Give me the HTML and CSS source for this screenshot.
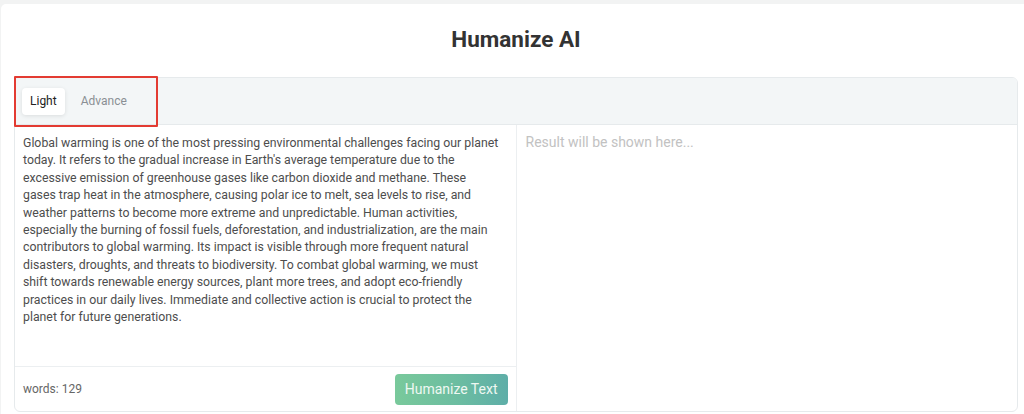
FILE: index.html
```html
<!DOCTYPE html>
<html lang="en">
<head>
<meta charset="utf-8">
<title>Humanize AI</title>
<link rel="stylesheet" href="styles.css">
</head>
<body>
<div class="card">
  <h1 class="title">Humanize AI</h1>
  <div class="panel">
    <div class="tabs">
      <button class="tab active">Light</button>
      <button class="tab">Advance</button>
    </div>
    <div class="highlight"></div>
    <div class="columns">
      <div class="col left">
        <div class="input-text">Global warming is one of the most pressing environmental challenges facing our planet today. It refers to the gradual increase in Earth's average temperature due to the excessive emission of greenhouse gases like carbon dioxide and methane. These gases trap heat in the atmosphere, causing polar ice to melt, sea levels to rise, and weather patterns to become more extreme and unpredictable. Human activities, especially the burning of fossil fuels, deforestation, and industrialization, are the main contributors to global warming. Its impact is visible through more frequent natural disasters, droughts, and threats to biodiversity. To combat global warming, we must shift towards renewable energy sources, plant more trees, and adopt eco-friendly practices in our daily lives. Immediate and collective action is crucial to protect the planet for future generations.</div>
        <div class="footer">
          <span class="words">words: 129</span>
          <button class="humanize">Humanize Text</button>
        </div>
      </div>
      <div class="col right">
        <div class="placeholder">Result will be shown here...</div>
      </div>
    </div>
  </div>
</div>
</body>
</html>
```
FILE: styles.css
```css
html, body {
  margin: 0;
  padding: 0;
}
body {
  background: #f2f3f3;
  font-family: Roboto, "Liberation Sans", Arial, sans-serif;
  height: 414px;
  overflow: hidden;
}
.card {
  background: #ffffff;
  margin: 4px 0 0 1px;
  border-radius: 5px 0 0 0;
  padding: 21px 6px 0 13px;
  height: 420px;
  box-sizing: border-box;
}
.title {
  margin: 0 0 24px 0;
  text-align: center;
  font-size: 22.5px;
  line-height: 28px;
  font-weight: 700;
  color: #333333;
}
.panel {
  position: relative;
  border: 1px solid #e6eaec;
  border-radius: 6px;
  background: #fff;
  height: 335px;
  box-sizing: border-box;
  display: flex;
  flex-direction: column;
}
.tabs {
  background: #f3f6f7;
  border-bottom: 1px solid #e6eaec;
  border-radius: 5px 5px 0 0;
  height: 47px;
  box-sizing: border-box;
  display: flex;
  align-items: center;
  padding: 0 0 0 7px;
}
.tab {
  font-family: inherit;
  font-size: 12px;
  line-height: 14px;
  border: none;
  background: transparent;
  color: #8a8f94;
  padding: 6px 8px 7px;
  border-radius: 4px;
  height: 27px;
  margin-right: 8px;
}
.tab.active {
  background: #ffffff;
  color: #222;
  box-shadow: 0 1px 4px rgba(0,0,0,0.10);
}
.highlight {
  position: absolute;
  left: -1px;
  top: -2px;
  width: 140px;
  height: 47px;
  border: 2px solid #e33b32;
  border-radius: 1px;
}
.columns {
  display: flex;
  flex: 1;
  min-height: 0;
}
.col {
  flex: 1;
  display: flex;
  flex-direction: column;
}
.col.left {
  border-right: 1px solid #eceff1;
}
.input-text {
  flex: 1;
  padding: 10px 16px 0 8px;
  font-size: 12.3px;
  line-height: 17.4px;
  color: #4d4d4d;
}
.footer {
  border-top: 1px solid #eceff1;
  height: 45px;
  box-sizing: border-box;
  display: flex;
  align-items: center;
  justify-content: space-between;
  padding: 0 8px 0 8px;
}
.words {
  font-size: 12px;
  color: #666;
}
.humanize {
  font-family: inherit;
  font-size: 14px;
  color: #eef8f2;
  border: none;
  border-radius: 4px;
  height: 31px;
  padding: 0 10px;
  background: linear-gradient(90deg, #79c99b 0%, #6cbda1 55%, #5eaea8 100%);
}
.placeholder {
  padding: 9px 9px;
  font-size: 14px;
  line-height: 17px;
  color: #c2c2c2;
}
```
